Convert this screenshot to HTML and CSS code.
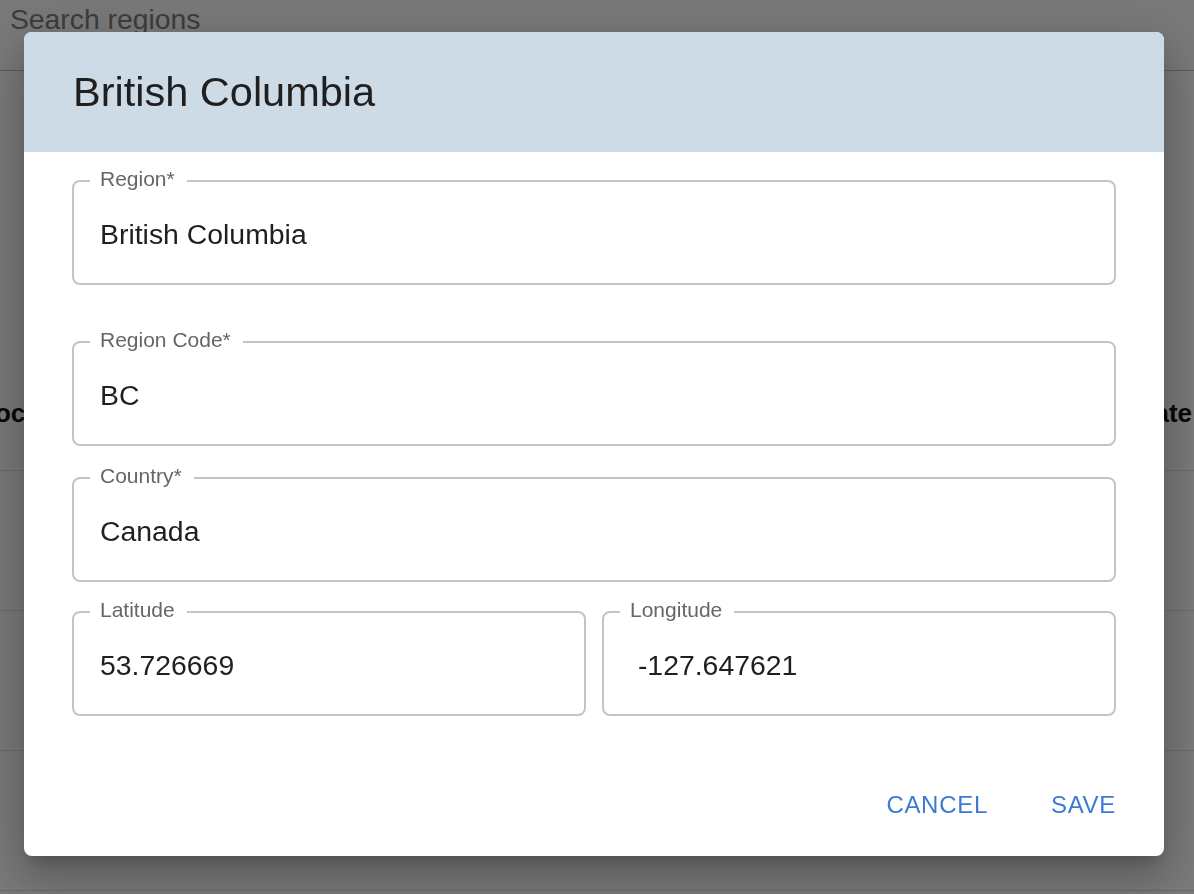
FILE: index.html
```html
<!DOCTYPE html>
<html lang="en">
<head>
<meta charset="utf-8">
<title>Regions</title>
<link rel="stylesheet" href="styles.css">
</head>
<body>
<div class="page">
  <div class="search">Search regions</div>
  <div class="table">
    <div class="thead">
      <span class="th th-first">Loc</span>
      <span class="th">Date</span>
    </div>
    <div class="trow"></div>
    <div class="trow"></div>
    <div class="trow"></div>
  </div>
</div>

<div class="backdrop">
  <div class="dialog" role="dialog">
    <div class="dialog-title">British Columbia</div>
    <div class="dialog-content">
      <fieldset class="field field-region">
        <legend>Region*</legend>
        <div class="value">British Columbia</div>
      </fieldset>
      <fieldset class="field field-code">
        <legend>Region Code*</legend>
        <div class="value">BC</div>
      </fieldset>
      <fieldset class="field field-country">
        <legend>Country*</legend>
        <div class="value">Canada</div>
      </fieldset>
      <div class="coords">
        <fieldset class="field">
          <legend>Latitude</legend>
          <div class="value">53.726669</div>
        </fieldset>
        <fieldset class="field">
          <legend>Longitude</legend>
          <div class="value"> -127.647621</div>
        </fieldset>
      </div>
    </div>
    <div class="actions">
      <button class="btn" type="button">CANCEL</button>
      <button class="btn" type="button">SAVE</button>
    </div>
  </div>
</div>
</body>
</html>
```

FILE: styles.css
```css
* { box-sizing: border-box; }

html, body {
  margin: 0;
  height: 100%;
  overflow: hidden;
}

body {
  font-family: "Liberation Sans", Arial, sans-serif;
  background: #ffffff;
  color: rgba(0, 0, 0, 0.87);
}

/* background page */
.page {
  width: 100%;
}

.search {
  height: 71px;
  border-bottom: 1px solid #c4c4c4;
  font-size: 28.3px;
  line-height: 39px;
  padding-left: 10px;
  color: #808080;
}

.table {
  margin-top: 285px;
}

.thead {
  height: 115px;
  border-bottom: 1px solid #e0e0e0;
  display: flex;
  align-items: center;
  justify-content: space-between;
  padding-right: 2px;
  font-size: 26px;
  font-weight: 700;
  color: #111;
}

.th-first {
  margin-left: -21px;
}

.trow {
  height: 140px;
  border-bottom: 1px solid #e0e0e0;
}

/* modal */
.backdrop {
  position: fixed;
  inset: 0;
  background: rgba(0, 0, 0, 0.53);
  display: flex;
  align-items: flex-start;
  justify-content: flex-start;
  padding: 32px 0 0 24px;
}

.dialog {
  width: 1140px;
  background: #ffffff;
  border-radius: 8px;
  overflow: hidden;
  display: flex;
  flex-direction: column;
  box-shadow:
    0 11px 15px -7px rgba(0, 0, 0, 0.2),
    0 24px 38px 3px rgba(0, 0, 0, 0.14),
    0 9px 46px 8px rgba(0, 0, 0, 0.12);
}

.dialog-title {
  height: 120px;
  background: #cddbe6;
  display: flex;
  align-items: center;
  padding: 0 48px 0 49px;
  font-size: 41.5px;
  font-weight: 400;
  color: #1f1f1f;
}

.dialog-content {
  padding: 17px 48px 0 48px;
  display: flex;
  flex-direction: column;
}

.field {
  margin: 0;
  padding: 0 26px 8px 26px;
  min-width: 0;
  border: 2px solid #c4c4c4;
  border-radius: 8px;
}

.field legend {
  font-size: 21px;
  line-height: 20px;
  padding: 0 12px 4px 10px;
  margin-left: -10px;
  color: #666666;
}

.value {
  height: 82px;
  line-height: 82px;
  font-size: 28.4px;
  color: #1f1f1f;
  white-space: pre;
}

.field-region { margin-bottom: 45px; }
.field-code { margin-bottom: 20px; }
.field-country { margin-bottom: 18px; }

.coords {
  display: grid;
  grid-template-columns: 1fr 1fr;
  gap: 16px;
}

.actions {
  display: flex;
  justify-content: flex-end;
  gap: 63px;
  padding: 65px 48px 27px 48px;
}

.btn {
  font-family: "Liberation Sans", Arial, sans-serif;
  font-size: 24px;
  line-height: 24px;
  letter-spacing: 0.7px;
  color: #3b7bd4;
  background: none;
  border: none;
  padding: 12px 0;
  margin: 0;
  cursor: pointer;
}
```
